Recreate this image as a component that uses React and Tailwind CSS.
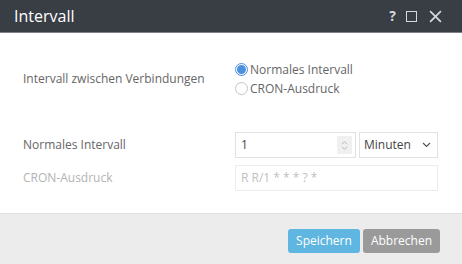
/* eslint-disable */

import React, { useState } from 'react';

const IntervalDialog = () => {
  const [mode, setMode] = useState('normal');
  const [value, setValue] = useState('1');

  return (
    <div className="w-[462px] h-[264px] flex flex-col bg-white font-['Open_Sans',sans-serif] overflow-hidden">
      {/* Header */}
      <div className="h-[33px] shrink-0 bg-[#393d44] border-b border-[#7d8087] flex items-center pl-[14px] pr-[20px]">
        <h1 className="text-white text-[16px] leading-none flex-1">Intervall</h1>
        <div className="flex items-center gap-[8px] text-[#d8d9db]">
          <span className="text-[14px] font-bold leading-none">?</span>
          <span className="w-[11px] h-[11px] border-[1.5px] border-[#d8d9db] ml-[2px]" />
          <svg className="w-[13px] h-[13px] ml-[4px]" viewBox="0 0 12 12" stroke="currentColor" strokeWidth="1.5" fill="none">
            <path d="M1 1l10 10M11 1L1 11" />
          </svg>
        </div>
      </div>

      {/* Body */}
      <div className="flex-1 pt-[28px] pl-[23px] pr-[24px] text-[12px] text-[#666]">
        <div className="flex items-center">
          <span className="w-[212px]">Intervall zwischen Verbindungen</span>
          <div className="flex flex-col gap-[2px]">
            <label className="flex items-center gap-[2px] leading-[17px]">
              <span
                onClick={() => setMode('normal')}
                className={
                  mode === 'normal'
                    ? 'w-[13px] h-[13px] rounded-full border border-[#4a8fe0] flex items-center justify-center'
                    : 'w-[13px] h-[13px] rounded-full border border-[#c4c4c4]'
                }
              >
                {mode === 'normal' && <span className="w-[9px] h-[9px] rounded-full bg-[#4a8fe0]" />}
              </span>
              Normales Intervall
            </label>
            <label className="flex items-center gap-[2px] leading-[17px]">
              <span
                onClick={() => setMode('cron')}
                className={
                  mode === 'cron'
                    ? 'w-[13px] h-[13px] rounded-full border border-[#4a8fe0] flex items-center justify-center'
                    : 'w-[13px] h-[13px] rounded-full border border-[#c4c4c4]'
                }
              >
                {mode === 'cron' && <span className="w-[9px] h-[9px] rounded-full bg-[#4a8fe0]" />}
              </span>
              CRON-Ausdruck
            </label>
          </div>
        </div>

        <div className="flex items-center mt-[35px]">
          <span className="w-[212px]">Normales Intervall</span>
          <div className="flex gap-[3px]">
            <div className="w-[121px] h-[26px] border border-[#e2e2e2] flex items-center pl-[5px] pr-[3px]">
              <input
                value={value}
                onChange={(e) => setValue(e.target.value)}
                className="flex-1 min-w-0 outline-none text-[12px] text-[#444] bg-transparent"
              />
              <div className="w-[15px] h-[18px] bg-[#f0f0f0] flex flex-col items-center justify-center text-[#b0b0b0]">
                <svg className="w-[7px] h-[5px]" viewBox="0 0 8 5" stroke="currentColor" fill="none">
                  <path d="M1 4.5L4 1.5l3 3" />
                </svg>
                <svg className="w-[7px] h-[5px] mt-[1px]" viewBox="0 0 8 5" stroke="currentColor" fill="none">
                  <path d="M1 .5L4 3.5l3-3" />
                </svg>
              </div>
            </div>
            <div className="w-[79px] h-[26px] border border-[#e2e2e2] flex items-center pl-[4px] pr-[6px] text-[#444]">
              <span className="flex-1">Minuten</span>
              <svg className="w-[9px] h-[6px]" viewBox="0 0 9 6" stroke="#555" strokeWidth="1.2" fill="none">
                <path d="M1 1l3.5 3.5L8 1" />
              </svg>
            </div>
          </div>
        </div>

        <div className="flex items-center mt-[7px]">
          <span className="w-[212px] text-[#b3b3b3]">CRON-Ausdruck</span>
          <div className="w-[203px] h-[26px] border border-[#ececec] flex items-center pl-[5px] text-[#c0c0c0]">
            R R/1 * * * ? *
          </div>
        </div>
      </div>

      {/* Footer */}
      <div className="h-[51px] shrink-0 bg-[#ececec] border-t border-[#e0e0e0] flex items-start justify-end pt-[15px] pr-[22px] gap-[3px]">
        <button className="h-[24px] px-[8px] rounded-[3px] bg-[#5fb6e1] text-white text-[12px]">Speichern</button>
        <button className="h-[24px] px-[8px] rounded-[3px] bg-[#9a9a9a] text-white text-[12px]">Abbrechen</button>
      </div>
    </div>
  );
};

export default function App() {
  return <IntervalDialog />;
}
